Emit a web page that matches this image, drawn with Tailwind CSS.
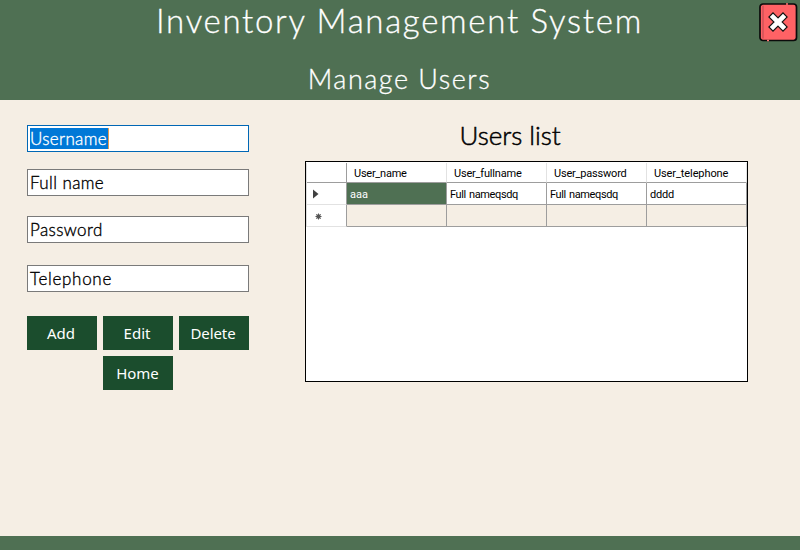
<!DOCTYPE html>
<html lang="en">
<head>
<meta charset="utf-8">
<title>Inventory Management System</title>
<script src="https://cdn.jsdelivr.net/npm/@tailwindcss/browser@4"></script>
</head>
<body class="w-[800px] h-[550px] overflow-hidden bg-[#f5eee4] flex flex-col font-['Lato',sans-serif]">
<header class="relative h-[100px] shrink-0 bg-[#4f7053] text-white flex flex-col items-center font-light whitespace-nowrap [-webkit-text-stroke:0.3px_white]">
  <h1 class="h-11 leading-[41px] text-[33px] tracking-[1.7px] -ml-px">Inventory Management System</h1>
  <h2 class="mt-4 h-10 leading-[38px] text-[27px] tracking-[1.5px] -ml-px">Manage Users</h2>
  <button class="absolute left-[759px] top-[3px] w-[39px] h-[39px]" aria-label="Close">
    <svg width="39" height="39" viewBox="0 0 39 39">
      <rect x="1" y="1" width="36.5" height="36.5" rx="3" fill="#ff6265" stroke="#0b0b0b" stroke-width="1.7"/>
      <path d="M4 2.500v33" stroke="#dc555b" stroke-width="2"/>
      <path d="M27 1h2M8 37.500h2" stroke="#ff7775" stroke-width="1.500"/>
      <path d="M14 14l10 10M24 14l-10 10" stroke="#111" stroke-width="7" stroke-linecap="square"/>
      <path d="M14 14l10 10M24 14l-10 10" stroke="#fff" stroke-width="4.600" stroke-linecap="square"/>
    </svg>
  </button>
</header>
<main class="flex-1 flex items-start">
  <section class="ml-[27px] w-[222px] pt-[25px] text-[17px] text-black font-light [-webkit-text-stroke:0.35px]">
    <div class="h-[27px] border border-[#0067b5] bg-white pl-[2px] flex items-center"><span class="h-[21px] leading-[22px] w-[79px] bg-[#0078d7] text-white border-r border-[#e39a50] whitespace-nowrap tracking-[0.35px]">Username</span></div>
    <div class="mt-[17px] h-[27px] border border-[#7a7a7a] bg-white pl-[2px] leading-[26px] tracking-[0.4px]">Full name</div>
    <div class="mt-5 h-[27px] border border-[#7a7a7a] bg-white pl-[2px] leading-[26px] tracking-[0.4px]">Password</div>
    <div class="mt-[22px] h-[27px] border border-[#7a7a7a] bg-white pl-[2px] leading-[26px] tracking-[0.7px]">Telephone</div>
    <div class="mt-6 grid grid-cols-3 gap-[6px] font-['Noto_Sans',sans-serif] font-normal text-[15px] text-white [-webkit-text-stroke:0]">
      <button class="h-[34px] bg-[#1b4d2d] pr-[2px]">Add</button>
      <button class="h-[34px] bg-[#1b4d2d] pr-[2px]">Edit</button>
      <button class="h-[34px] bg-[#1b4d2d] pr-[2px] tracking-[-0.1px]">Delete</button>
      <button class="h-[34px] bg-[#1b4d2d] col-start-2 pr-[1px]">Home</button>
    </div>
  </section>
  <section class="ml-14 w-[443px] pt-4">
    <h3 class="h-[45px] leading-[39px] text-[26px] text-black text-center pr-[33px] font-light tracking-[-0.05px] [-webkit-text-stroke:0.5px]">Users list</h3>
    <div class="h-[221px] border border-black bg-white pt-px text-[11px] font-['Roboto',sans-serif] text-black">
      <div class="w-[441px] grid grid-cols-[40px_100px_100px_100px_100px] grid-rows-[20px_22px_22px] border-l border-[#dedede] *:border-b *:border-r *:border-[#9d9d9d] *:whitespace-nowrap">
        <div></div>
        <div class="pl-[7px] leading-[21px] border-r-[#e2e2e2]! tracking-[-0.25px]">User_name</div>
        <div class="pl-[7px] leading-[21px] border-r-[#e2e2e2]! tracking-[-0.2px]">User_fullname</div>
        <div class="pl-[7px] leading-[21px] border-r-[#e2e2e2]! tracking-[-0.2px]">User_password</div>
        <div class="pl-[7px] leading-[21px] border-r-[#e2e2e2]! tracking-[-0.1px]">User_telephone</div>
        <div class="border-b-[#e2e2e2]! flex items-center pl-[6px]"><svg width="6" height="10" viewBox="0 0 6 10"><path d="M0 .5v9L5.500 5z" fill="#404040"/></svg></div>
        <div class="pl-[3px] leading-[23px] bg-[#4f7053] text-white">aaa</div>
        <div class="pl-[3px] leading-[23px] tracking-[-0.4px] [word-spacing:1px]">Full nameqsdq</div>
        <div class="pl-[3px] leading-[23px] tracking-[-0.4px] [word-spacing:1px]">Full nameqsdq</div>
        <div class="pl-[3px] leading-[23px] tracking-[-0.2px]">dddd</div>
        <div class="border-b-[#e2e2e2]! flex items-center pl-2 pt-px"><svg width="7" height="7" viewBox="0 0 7 7"><circle cx="3.500" cy="3.500" r="2.200" fill="#555"/><path d="M3.500 .5v6M.5 3.500h6M1.300 1.300l4.400 4.400M5.700 1.300L1.300 5.700" stroke="#555" stroke-width="1"/></svg></div>
        <div class="bg-[#f5eee4]"></div><div class="bg-[#f5eee4]"></div><div class="bg-[#f5eee4]"></div><div class="bg-[#f5eee4]"></div>
      </div>
    </div>
  </section>
</main>
<footer class="h-[14px] shrink-0 bg-[#4f7053]"></footer>
</body>
</html>
